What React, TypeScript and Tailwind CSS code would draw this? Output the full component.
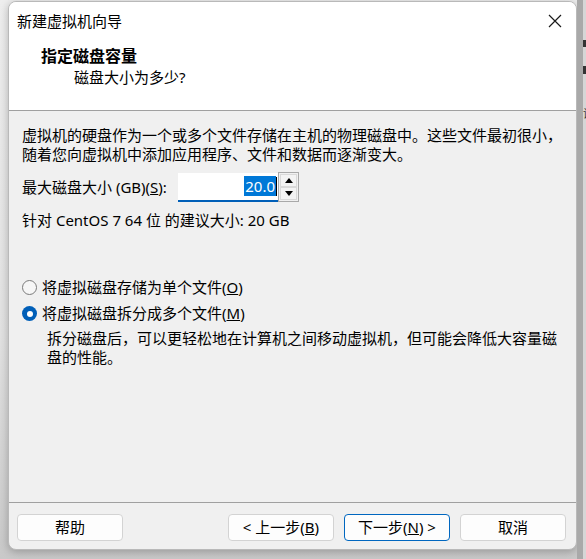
import React from 'react';

// ─── Small parts ──────────────────────────────────────────────────────────────

function Radio({ checked }: { checked?: boolean }) {
  if (checked) {
    return (
      <span className="flex h-[15px] w-[15px] shrink-0 items-center justify-center rounded-full bg-[#005fb8]">
        <span className="h-[6px] w-[6px] rounded-full bg-white" />
      </span>
    );
  }
  return <span className="h-[15px] w-[15px] shrink-0 rounded-full border border-[#7a7a7a] bg-[#f6f6f6]" />;
}

function Button({ children, primary }: { children: React.ReactNode; primary?: boolean }) {
  return (
    <button
      className={
        'flex h-[27px] w-[106px] items-center justify-center rounded-[4px] bg-[#fdfdfd] text-[15px] leading-[19px] text-black ' +
        (primary ? 'border border-[#0067c0]' : 'border border-[#d3d3d3]')
      }
    >
      {children}
    </button>
  );
}

function Spinner() {
  return (
    <div className="flex h-[30px] w-[21px] flex-col border border-[#a9a9a9] bg-[#f0f0f0] p-[1px]">
      <div className="flex flex-1 items-center justify-center border border-[#d9d9d9] bg-[#f3f3f3]">
        <svg width="8" height="5" viewBox="0 0 8 5">
          <path d="M0 5 L4 0 L8 5 Z" fill="#000" />
        </svg>
      </div>
      <div className="flex flex-1 items-center justify-center border border-[#d9d9d9] bg-[#f3f3f3]">
        <svg width="8" height="5" viewBox="0 0 8 5">
          <path d="M0 0 L4 5 L8 0 Z" fill="#000" />
        </svg>
      </div>
    </div>
  );
}

// ─── Page ─────────────────────────────────────────────────────────────────────

export default function App() {
  return (
    <div className="flex h-[559px] w-[586px] overflow-hidden bg-[linear-gradient(180deg,#eeeeee_0%,#e2e2e2_60%,#c9c9c9_100%)] font-['Noto_Sans','Noto_Sans_CJK_SC',sans-serif] text-black">
      {/* left margin */}
      <div className="w-[8px] shrink-0" />

      {/* dialog window */}
      <div className="mt-[1px] flex h-[549px] w-[569px] shrink-0 flex-col overflow-hidden rounded-[8px] border border-[#b9b9b9] bg-[#f0f0f0] shadow-[0_2px_8px_rgba(0,0,0,0.25)]">
        {/* header */}
        <div className="flex h-[109px] shrink-0 flex-col border-b border-[#a0a0a0] bg-white">
          <div className="flex h-[38px] items-center justify-between pl-[8px] pr-[14px]">
            <span className="text-[15px] leading-[19px]">新建虚拟机向导</span>
            <svg width="14" height="14" viewBox="0 0 14 14">
              <path d="M1 1 L13 13 M13 1 L1 13" stroke="#1a1a1a" strokeWidth="1.2" />
            </svg>
          </div>
          <div className="pl-[32px] pt-[6px] text-[16px] font-bold leading-[20px]">指定磁盘容量</div>
          <div className="pl-[65px] pt-[2px] text-[15px] leading-[19px]">磁盘大小为多少?</div>
        </div>

        {/* body */}
        <div className="flex flex-1 flex-col pl-[13px] pr-[6px] pt-[15px] text-[15px] leading-[19px]">
          <p>
            虚拟机的硬盘作为一个或多个文件存储在主机的物理磁盘中。这些文件最初很小，
            <br />
            随着您向虚拟机中添加应用程序、文件和数据而逐渐变大。
          </p>

          <div className="mt-[8px] flex items-center">
            <span className="w-[156px]">
              最大磁盘大小 (GB)(<u>S</u>):
            </span>
            <div className="flex h-[29px] w-[100px] items-center justify-end border-b-2 border-[#005fb8] bg-white pr-[1px]">
              <span className="bg-[#0078d7] px-[1px] leading-[20px] text-white">20.0</span>
              <span className="h-[19px] w-[1px] bg-black" />
            </div>
            <Spinner />
          </div>

          <p className="mt-[9px]">针对 CentOS 7 64 位 的建议大小: 20 GB</p>

          <div className="mt-[48px] flex items-center gap-[5px]">
            <Radio />
            <span>
              将虚拟磁盘存储为单个文件(<u>O</u>)
            </span>
          </div>
          <div className="mt-[7px] flex items-center gap-[5px]">
            <Radio checked />
            <span>
              将虚拟磁盘拆分成多个文件(<u>M</u>)
            </span>
          </div>
          <p className="mt-[6px] pl-[25px]">
            拆分磁盘后，可以更轻松地在计算机之间移动虚拟机，但可能会降低大容量磁
            <br />
            盘的性能。
          </p>
        </div>

        {/* footer */}
        <div className="flex h-[47px] shrink-0 items-start border-t border-[#a0a0a0] pl-[8px] pr-[10px] pt-[11px]">
          <Button>帮助</Button>
          <div className="flex-1" />
          <div className="flex gap-[10px]">
            <Button>&lt; 上一步(<u>B</u>)</Button>
            <Button primary>
              下一步(<u>N</u>) &gt;
            </Button>
            <Button>取消</Button>
          </div>
        </div>
      </div>

      {/* neighbouring window edge */}
      <div className="flex h-full flex-1 overflow-hidden bg-[#a9a9a9]">
        <div className="w-[6px] shrink-0" />
        <div className="flex flex-1 flex-col items-start bg-[#d6d6d6] pt-[40px]">
          <span className="h-[7px] w-[3px] bg-[#333]" />
          <span className="mt-[19px] h-[8px] w-[3px] bg-[#333]" />
          <span className="mt-[30px] text-[11px] leading-[19px] text-[#333]">设</span>
        </div>
      </div>
    </div>
  );
}
